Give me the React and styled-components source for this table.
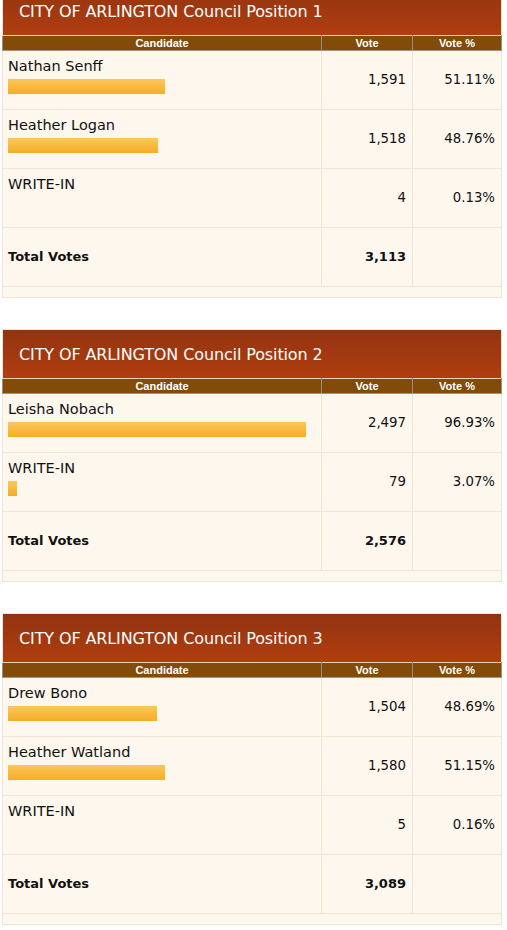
import React from "react";
import styled, { createGlobalStyle } from "styled-components";

const Global = createGlobalStyle`
  html, body { margin: 0; padding: 0; background: #fff; }
  body { font-family: "DejaVu Sans", Verdana, sans-serif; color: #111; }
`;

const Page = styled.div`
  margin-top: -14px;
  padding: 0 5px 0 2px;
  display: flex;
  flex-direction: column;
  gap: 31px;
`;

const Panel = styled.section`
  width: 500px;
  background: #fef7ee;
`;

const Title = styled.h2`
  margin: 0;
  box-sizing: border-box;
  height: 49px;
  display: flex;
  align-items: center;
  padding-left: 16px;
  border: 1px solid #f3e2cf;
  border-bottom: none;
  background: linear-gradient(to bottom, #923411 0%, #b13d0f 100%);
  color: #fff;
  font-family: "DejaVu Sans", Verdana, sans-serif;
  font-weight: normal;
  font-size: 16px;
  letter-spacing: -0.12px;
`;

const Table = styled.table`
  width: 100%;
  border-collapse: collapse;
  table-layout: fixed;
`;

const Th = styled.th`
  width: ${(p) => p.$w || "auto"};
  height: 14px;
  padding: 0;
  background: #834b09;
  color: #fff;
  font-family: "Liberation Sans", Arial, sans-serif;
  font-weight: bold;
  font-size: 11px;
  line-height: 14px;
  text-align: center;
  border-top: 1px solid #e8d2b4;
  border-left: 1px solid #9b8f84;
  border-right: 1px solid #9b8f84;
  border-bottom: 1px solid #a39586;
`;

const Td = styled.td`
  border: 1px solid #f1e4d3;
  padding: 0 6px 0 5px;
  vertical-align: middle;
  text-align: ${(p) => (p.$right ? "right" : "left")};
  font-size: 13.3px;
  line-height: 16px;
  white-space: nowrap;
`;

const NameCell = styled(Td)`
  padding: 6px 6px 15px 5px;
  vertical-align: top;
`;

const Name = styled.div`
  font-size: 14.5px;
  line-height: 18px;
`;

const Bar = styled.div`
  margin-top: 4px;
  height: 15px;
  background: linear-gradient(to bottom, #fcc65e 0%, #f5ad23 100%);
`;

const TotalCell = styled(Td)`
  height: 58px;
  padding-top: 0;
  padding-bottom: 0;
  font-weight: bold;
  font-size: 13px;
`;

const Spacer = styled.td`
  height: 10px;
  padding: 0;
  border: 1px solid #f1e4d3;
`;

const races = [
  {
    title: "CITY OF ARLINGTON Council Position 1",
    total: "3,113",
    rows: [
      { name: "Nathan Senff", votes: "1,591", pct: 51.11 },
      { name: "Heather Logan", votes: "1,518", pct: 48.76 },
      { name: "WRITE-IN", votes: "4", pct: 0.13 },
    ],
  },
  {
    title: "CITY OF ARLINGTON Council Position 2",
    total: "2,576",
    rows: [
      { name: "Leisha Nobach", votes: "2,497", pct: 96.93 },
      { name: "WRITE-IN", votes: "79", pct: 3.07 },
    ],
  },
  {
    title: "CITY OF ARLINGTON Council Position 3",
    total: "3,089",
    rows: [
      { name: "Drew Bono", votes: "1,504", pct: 48.69 },
      { name: "Heather Watland", votes: "1,580", pct: 51.15 },
      { name: "WRITE-IN", votes: "5", pct: 0.16 },
    ],
  },
];

function Race({ race }) {
  return (
    <Panel>
      <Title>{race.title}</Title>
      <Table>
        <thead>
          <tr>
            <Th $w="318px">Candidate</Th>
            <Th $w="90px">Vote</Th>
            <Th>Vote %</Th>
          </tr>
        </thead>
        <tbody>
          {race.rows.map((r) => (
            <tr key={r.name}>
              <NameCell>
                <Name>{r.name}</Name>
                <Bar style={{ width: `${Math.floor((r.pct / 100) * 308)}px` }} />
              </NameCell>
              <Td $right>{r.votes}</Td>
              <Td $right>{r.pct.toFixed(2)}%</Td>
            </tr>
          ))}
          <tr>
            <TotalCell>Total Votes</TotalCell>
            <TotalCell $right>{race.total}</TotalCell>
            <TotalCell />
          </tr>
          <tr>
            <Spacer colSpan={3} />
          </tr>
        </tbody>
      </Table>
    </Panel>
  );
}

export default function App() {
  return (
    <>
      <Global />
      <Page>
        {races.map((r) => (
          <Race key={r.title} race={r} />
        ))}
      </Page>
    </>
  );
}
